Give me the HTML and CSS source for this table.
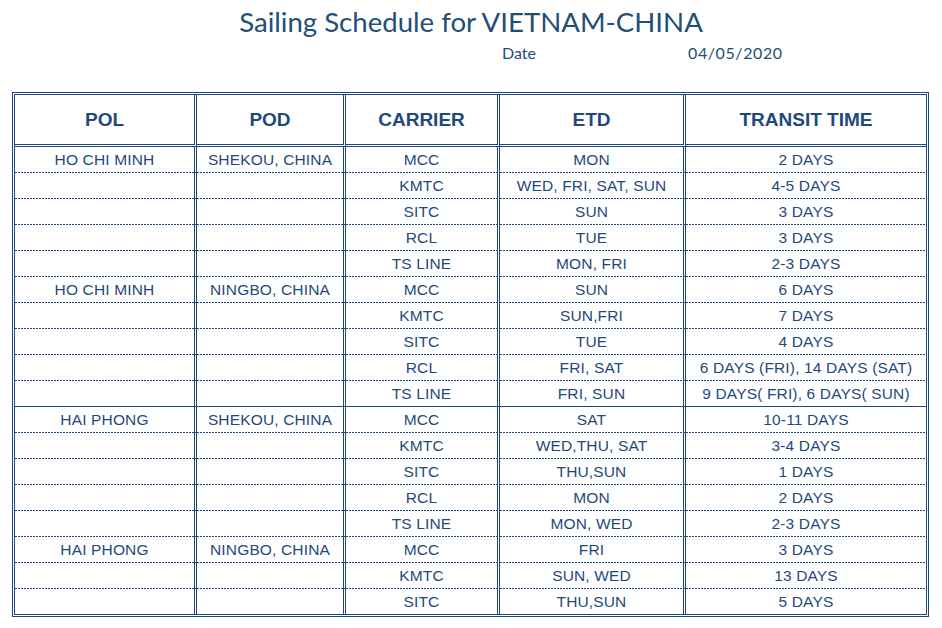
FILE: index.html
```html
<!DOCTYPE html>
<html lang="en">
<head>
<meta charset="utf-8">
<title>Sailing Schedule for VIETNAM-CHINA</title>
<link rel="stylesheet" href="styles.css">
</head>
<body>
<h1 class="title">Sailing Schedule for VIETNAM-CHINA</h1>
<div class="meta">
  <span class="meta-label">Date</span>
  <span class="meta-value">04/05/2020</span>
</div>
<div class="frame">
  <table class="schedule">
    <colgroup>
      <col class="c-pol"><col class="c-pod"><col class="c-carrier"><col class="c-etd"><col class="c-tt">
    </colgroup>
    <thead>
      <tr class="head-row"><th>POL</th><th>POD</th><th>CARRIER</th><th>ETD</th><th>TRANSIT TIME</th></tr>
    </thead>
    <tbody>
      <tr class="row dot"><td>HO CHI MINH</td><td>SHEKOU, CHINA</td><td>MCC</td><td>MON</td><td>2 DAYS</td></tr>
      <tr class="row dot"><td></td><td></td><td>KMTC</td><td>WED, FRI, SAT, SUN</td><td>4-5 DAYS</td></tr>
      <tr class="row dot"><td></td><td></td><td>SITC</td><td>SUN</td><td>3 DAYS</td></tr>
      <tr class="row dot"><td></td><td></td><td>RCL</td><td>TUE</td><td>3 DAYS</td></tr>
      <tr class="row dot"><td></td><td></td><td>TS LINE</td><td>MON, FRI</td><td>2-3 DAYS</td></tr>
      <tr class="row dot"><td>HO CHI MINH</td><td>NINGBO, CHINA</td><td>MCC</td><td>SUN</td><td>6 DAYS</td></tr>
      <tr class="row dot"><td></td><td></td><td>KMTC</td><td>SUN,FRI</td><td>7 DAYS</td></tr>
      <tr class="row dot"><td></td><td></td><td>SITC</td><td>TUE</td><td>4 DAYS</td></tr>
      <tr class="row dot"><td></td><td></td><td>RCL</td><td>FRI, SAT</td><td>6 DAYS (FRI), 14 DAYS (SAT)</td></tr>
      <tr class="row solid"><td></td><td></td><td>TS LINE</td><td>FRI, SUN</td><td>9 DAYS( FRI), 6 DAYS( SUN)</td></tr>
      <tr class="row dot"><td>HAI PHONG</td><td>SHEKOU, CHINA</td><td>MCC</td><td>SAT</td><td>10-11 DAYS</td></tr>
      <tr class="row dot"><td></td><td></td><td>KMTC</td><td>WED,THU, SAT</td><td>3-4 DAYS</td></tr>
      <tr class="row dot"><td></td><td></td><td>SITC</td><td>THU,SUN</td><td>1 DAYS</td></tr>
      <tr class="row dot"><td></td><td></td><td>RCL</td><td>MON</td><td>2 DAYS</td></tr>
      <tr class="row dot"><td></td><td></td><td>TS LINE</td><td>MON, WED</td><td>2-3 DAYS</td></tr>
      <tr class="row dot"><td>HAI PHONG</td><td>NINGBO, CHINA</td><td>MCC</td><td>FRI</td><td>3 DAYS</td></tr>
      <tr class="row dot"><td></td><td></td><td>KMTC</td><td>SUN, WED</td><td>13 DAYS</td></tr>
      <tr class="row last"><td></td><td></td><td>SITC</td><td>THU,SUN</td><td>5 DAYS</td></tr>
    </tbody>
  </table>
</div>
</body>
</html>
```

FILE: styles.css
```css
html, body {
  margin: 0;
  padding: 0;
  background: #ffffff;
}

body {
  width: 942px;
  font-family: "Liberation Sans", Arial, sans-serif;
  color: #1f497d;
}

.title {
  margin: 0;
  padding-top: 2px;
  height: 38px;
  line-height: 40px;
  text-align: center;
  font-family: Lato, "Open Sans", sans-serif;
  font-weight: normal;
  font-size: 27.6px;
  color: #1f4e79;
}

.meta {
  display: flex;
  height: 52px;
  box-sizing: border-box;
  padding-left: 502px;
  padding-top: 1px;
  line-height: 24px;
  font-family: Lato, "Open Sans", sans-serif;
  font-size: 16px;
  color: #1f4e79;
}

.meta-label {
  width: 186px;
}

.meta-value {
  letter-spacing: 0.6px;
}

.frame {
  margin-left: 12px;
  width: 911px;
  border: 3px double #1f497d;
}

.schedule {
  width: 911px;
  table-layout: fixed;
  border-collapse: separate;
  border-spacing: 0;
}

.c-pol { width: 182px; }
.c-pod { width: 149px; }
.c-carrier { width: 154px; }
.c-etd { width: 186px; }
.c-tt { width: 240px; }

.schedule th,
.schedule td {
  padding: 0;
  text-align: center;
  white-space: nowrap;
  border-right: 3px double #1f497d;
}

.schedule th:last-child,
.schedule td:last-child {
  border-right: none;
}

.head-row {
  height: 52px;
}

.schedule th {
  border-bottom: 3px double #1f497d;
  font-size: 19px;
  font-weight: bold;
  line-height: 49px;
}

.row {
  height: 26px;
}

.schedule td {
  font-size: 15.5px;
  letter-spacing: 0.15px;
  line-height: 25px;
  height: 25px;
}

.row.dot td {
  padding-bottom: 1px;
  background-image: linear-gradient(to right, #1f497d 2px, transparent 2px);
  background-size: 3px 1px;
  background-repeat: repeat-x;
  background-position: left bottom;
}

.row.solid td {
  border-bottom: 1px solid #1f497d;
}

.row.last {
  height: 25px;
}
```
